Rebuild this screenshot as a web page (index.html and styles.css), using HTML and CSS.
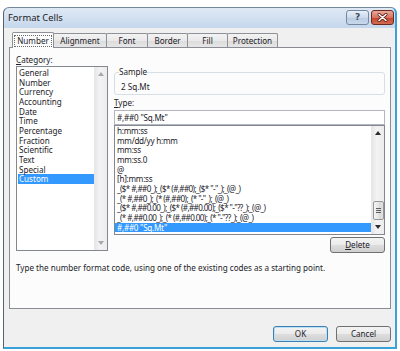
FILE: index.html
```html
<!DOCTYPE html>
<html lang="en">
<head>
<meta charset="UTF-8">
<title>Format Cells</title>
<link rel="stylesheet" href="styles.css">
</head>
<body>
<div class="window">
	<div class="titlebar">
		<span class="title">Format Cells</span>
		<div class="capbtns">
			<span class="cap help">?</span>
			<span class="cap close">
				<svg width="11" height="9" viewBox="0 0 11 9"><path d="M2 1.5 L9 7.5 M9 1.5 L2 7.5" stroke="#5a1f16" stroke-width="3" stroke-linecap="round"/><path d="M2 1.5 L9 7.5 M9 1.5 L2 7.5" stroke="#fff" stroke-width="1.6" stroke-linecap="round"/></svg>
			</span>
		</div>
	</div>
	<div class="client">
		<div class="tabs">
			<span class="tab active w-number"><span class="focus">Number</span></span>
			<span class="tab w-align">Alignment</span>
			<span class="tab w-font">Font</span>
			<span class="tab w-border">Border</span>
			<span class="tab w-fill">Fill</span>
			<span class="tab w-prot">Protection</span>
		</div>
		<div class="panel">
			<div class="cols">
				<div class="left">
					<div class="lbl"><u>C</u>ategory:</div>
					<div class="listbox cat">
						<ul class="items">
							<li>General</li>
							<li>Number</li>
							<li>Currency</li>
							<li>Accounting</li>
							<li>Date</li>
							<li>Time</li>
							<li>Percentage</li>
							<li>Fraction</li>
							<li>Scientific</li>
							<li>Text</li>
							<li>Special</li>
							<li class="sel">Custom</li>
						</ul>
						<div class="vscroll off">
							<span class="arrow up"></span>
							<span class="arrow down"></span>
						</div>
					</div>
				</div>
				<div class="right">
					<fieldset class="sample">
						<legend>Sample</legend>
						<div class="sample-val">2 Sq.Mt</div>
					</fieldset>
					<div class="lbl type-lbl"><u>T</u>ype:</div>
					<div class="textbox">#,##0 "Sq.Mt"</div>
					<div class="listbox types">
						<ul class="items">
							<li>h:mm:ss</li>
							<li>mm/dd/yy h:mm</li>
							<li>mm:ss</li>
							<li>mm:ss.0</li>
							<li>@</li>
							<li>[h]:mm:ss</li>
							<li class="code">_($* #,##0_);_($* (#,##0);_($* "-"_);_(@_)</li>
							<li class="code">_(* #,##0_);_(* (#,##0);_(* "-"_);_(@_)</li>
							<li class="code">_($* #,##0.00_);_($* (#,##0.00);_($* "-"??_);_(@_)</li>
							<li class="code">_(* #,##0.00_);_(* (#,##0.00);_(* "-"??_);_(@_)</li>
							<li class="sel">#,##0 "Sq.Mt"</li>
						</ul>
						<div class="vscroll">
							<span class="arrow up"></span>
							<span class="thumb"><i></i><i></i><i></i></span>
							<span class="arrow down"></span>
						</div>
					</div>
					<div class="actions"><button class="btn"><u>D</u>elete</button></div>
				</div>
			</div>
			<p class="hint">Type the number format code, using one of the existing codes as a starting point.</p>
		</div>
		<div class="footer">
			<button class="btn default">OK</button>
			<button class="btn">Cancel</button>
		</div>
	</div>
</div>
</body>
</html>
```

FILE: styles.css
```css
* { margin: 0; padding: 0; box-sizing: border-box; }
html, body { height: 100%; overflow: hidden; }
body { background: #fff; padding: 7px 3px 2px 3px; font: 8.1px/12px "Noto Sans", "Open Sans", sans-serif; color: #231c29; }

.window { height: 342px; display: flex; flex-direction: column; border-left: 1px solid #56626f; border-top: 1px solid #75879a; border-right: 2px solid #3aa2d9; border-bottom: 2px solid #3aa2d9; border-radius: 6px 6px 0 0; background: linear-gradient(#dfe9f5, #c5d7ec 20px); }
.titlebar { height: 20px; flex: none; display: flex; justify-content: space-between; align-items: flex-start; padding: 0 1px 0 4px; }
.title { line-height: 19px; font-size: 9.4px; color: #1b1b1b; }
.capbtns { display: flex; gap: 2px; margin-top: 2px; }
.cap { width: 23px; height: 15px; border-radius: 3px; display: flex; align-items: center; justify-content: center; }
.help { border: 1px solid #7489a1; background: linear-gradient(#e8eff8, #cbdaeb 50%, #b7cbe2 51%, #c9d9ec); color: #3b4a5c; font: bold 9px/1 "DejaVu Sans", sans-serif; }
.close { border: 1px solid #6b2a20; background: linear-gradient(#e9a99b, #d8725f 50%, #c4442e 51%, #d26b4f); }

.client { flex: 1; background: #f0f0f0; padding: 4px 4px 5px 5px; display: flex; flex-direction: column; }
.tabs { height: 15px; display: flex; align-items: flex-end; padding-left: 3px; position: relative; z-index: 1; }
.tab { height: 14px; border: 1px solid #8e9197; border-bottom: none; border-radius: 2px 2px 0 0; margin-right: -1px; background: linear-gradient(#f3f3f3, #e9e9e9 50%, #dcdcdc 51%, #e6e6e6); display: flex; align-items: center; justify-content: center; line-height: 12px; }
.tab.active { height: 16px; margin-bottom: -1px; background: #fcfcfc; }
.focus { border: 1px dotted #6a6a6a; padding: 0 2px; line-height: 10px; }
.w-number { width: 42px; }
.w-align { width: 54px; }
.w-font { width: 42px; }
.w-border { width: 41px; }
.w-fill { width: 41px; }
.w-prot { width: 51px; }

.panel { height: 262px; flex: none; border: 1px solid #898c95; background: #fcfcfc; padding: 6px 4px 0 6px; }
.cols { display: grid; grid-template-columns: 92px 271px; column-gap: 6px; }
.right { padding-top: 12px; }
.lbl { line-height: 12px; }
.listbox { display: flex; border: 1px solid #828790; background: #fff; }
.cat { height: 185px; }
.items { list-style: none; flex: 1; line-height: 9.65px; white-space: nowrap; overflow: hidden; }
.cat .items { padding: 1px 0 0 1px; }
.cat .items li { padding-left: 1px; }
.types .items { letter-spacing: -0.25px; }
.types .items li { padding-left: 2px; }
.types .items li.code { letter-spacing: -0.6px; }
.items li.sel { background: #3399ff; color: #fff; }

.vscroll { width: 13px; flex: none; background: linear-gradient(90deg, #e6e6e6, #f3f3f3 40%, #ececec); border-left: 1px solid #e8e8e8; display: flex; flex-direction: column; align-items: center; padding: 5px 0; }
.arrow { width: 0; height: 0; border-left: 3px solid transparent; border-right: 3px solid transparent; }
.arrow.up { border-bottom: 4px solid #2c2c2c; }
.arrow.down { border-top: 4px solid #2c2c2c; margin-top: auto; }
.off .arrow.up { border-bottom-color: #a8a8a8; }
.off .arrow.down { border-top-color: #a8a8a8; }
.thumb { width: 11px; height: 19px; margin-top: auto; border: 1px solid #979797; border-radius: 2px; background: linear-gradient(90deg, #f4f4f4, #e6e6e6 50%, #d8d8d8 51%, #e2e2e2); display: flex; flex-direction: column; align-items: center; justify-content: center; gap: 1px; }
.thumb i { width: 5px; height: 1px; background: #5d5d5d; }
.vscroll .thumb + .down { margin-top: 5px; }

.sample { border: 1px solid #d5dfe5; border-radius: 3px; padding: 0 0 1px 4px; height: 29px; }
.sample legend { line-height: 12px; padding: 0; }
.sample-val { padding: 3px 0 0 2px; line-height: 12px; }
.type-lbl { margin-top: 2px; }
.textbox { margin-top: 1px; height: 15px; border: 1px solid #b3b6bd; background: #fff; line-height: 13px; padding-left: 2px; letter-spacing: -0.2px; }
.types { height: 110px; }
.actions { display: flex; justify-content: flex-end; margin-top: 2px; }

.btn { width: 55px; height: 16px; border: 1px solid #707070; border-radius: 3px; background: linear-gradient(#f3f3f3, #ebebeb 50%, #dddddd 51%, #d0d0d0); font: inherit; color: inherit; line-height: 12px; }
.btn.default { border-color: #3c7fb1; box-shadow: inset 0 0 0 1px #b9e0f7; }
.hint { margin-top: 9px; line-height: 12px; }
.footer { margin-top: 17px; display: flex; justify-content: flex-end; gap: 8px; }
```
